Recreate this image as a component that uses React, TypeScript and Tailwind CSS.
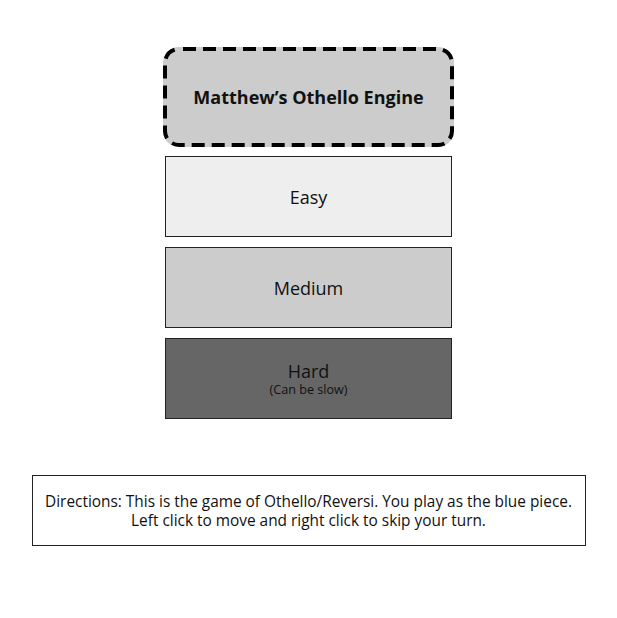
import React from 'react';

const levels = [
  { name: 'Easy', bg: 'bg-[#eeeeee]' },
  { name: 'Medium', bg: 'bg-[#cccccc]' },
  { name: 'Hard', bg: 'bg-[#666666]', note: '(Can be slow)' },
];

export default function App() {
  return (
    <div className="flex flex-col items-center pt-[47px] text-[#111] font-['Open_Sans',sans-serif]">
      <div className="relative flex items-center justify-center w-[291px] h-[100px] rounded-[16px] bg-[#cccccc]">
        {/* dashed outline, drawn so the dash length matches */}
        <svg className="absolute inset-0" width="291" height="100" viewBox="0 0 291 100" fill="none">
          <rect x="2" y="2" width="287" height="96" rx="14" stroke="#000" strokeWidth="4" strokeDasharray="13 7" strokeDashoffset="-4" />
        </svg>
        <h1 className="relative text-[18px] font-bold">Matthew’s Othello Engine</h1>
      </div>

      <div className="flex flex-col gap-[10px] mt-[9px]">
        {levels.map((l) => (
          <button
            key={l.name}
            className={`flex flex-col items-center justify-center w-[287px] h-[81px] border border-[#222] ${l.bg}`}
          >
            <span className="text-[18px] leading-[22px]">{l.name}</span>
            {l.note && <span className="text-[12.6px] leading-[16px]">{l.note}</span>}
          </button>
        ))}
      </div>

      <div className="flex items-center justify-center w-[554px] h-[71px] mt-[56px] border border-[#222] text-center text-[15.4px] leading-[19px]">
        <p>
          Directions: This is the game of Othello/Reversi. You play as the blue piece.
          <br />
          Left click to move and right click to skip your turn.
        </p>
      </div>
    </div>
  );
}
